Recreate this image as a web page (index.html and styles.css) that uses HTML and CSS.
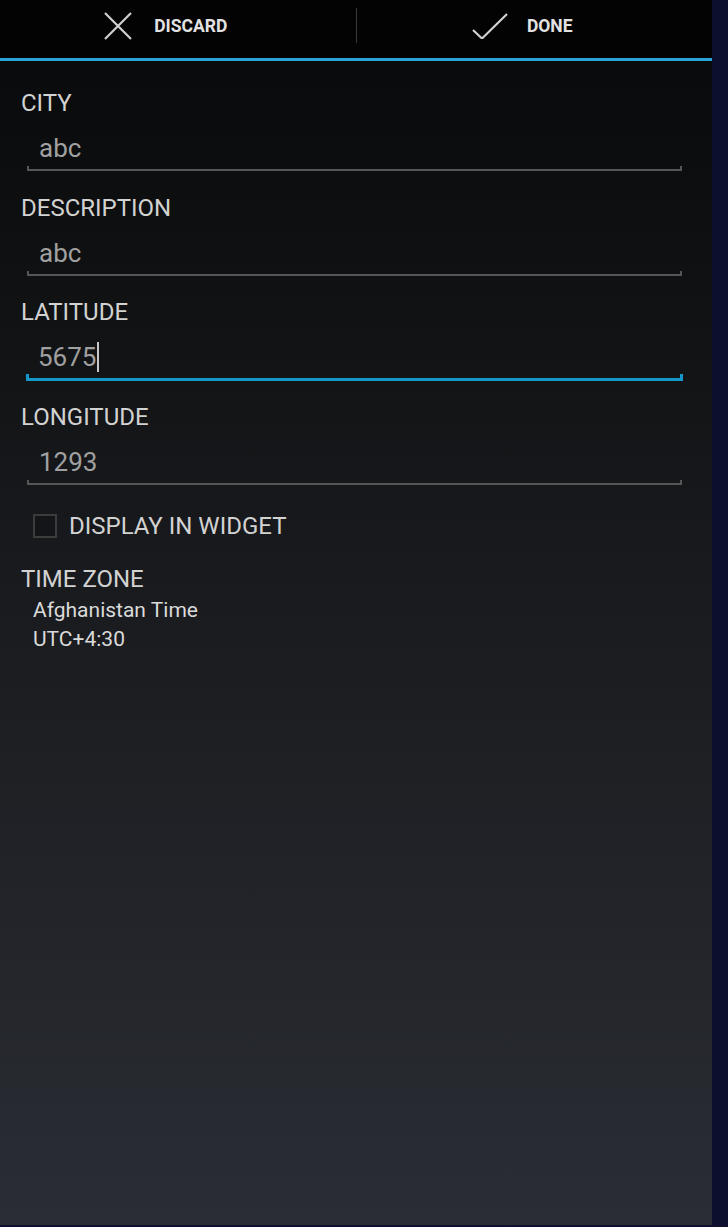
FILE: index.html
```html
<!DOCTYPE html>
<html>
<head>
<meta charset="utf-8">
<link rel="stylesheet" href="styles.css">
</head>
<body>
<div class="screen">
  <div class="panel">
    <div class="actionbar">
      <div class="action">
        <svg class="icon" width="28" height="28" viewBox="0 0 28 28"><path d="M1 1 L27 27 M27 1 L1 27" stroke="#d0d0d0" stroke-width="2.2" fill="none"/></svg>
        <span class="action-text">DISCARD</span>
      </div>
      <div class="divider"></div>
      <div class="action">
        <svg class="icon" width="36" height="26" viewBox="0 0 36 26"><path d="M1 17 L10 25.5 L35 1" stroke="#d0d0d0" stroke-width="2.2" fill="none"/></svg>
        <span class="action-text">DONE</span>
      </div>
    </div>
    <div class="content">
      <div class="field">
        <div class="label">CITY</div>
        <div class="input">
          <div class="value">abc</div>
          <div class="underline"></div>
        </div>
      </div>
      <div class="field">
        <div class="label">DESCRIPTION</div>
        <div class="input">
          <div class="value">abc</div>
          <div class="underline"></div>
        </div>
      </div>
      <div class="field">
        <div class="label">LATITUDE</div>
        <div class="input focused">
          <div class="value">5675<span class="cursor"></span></div>
          <div class="underline"></div>
        </div>
      </div>
      <div class="field">
        <div class="label">LONGITUDE</div>
        <div class="input">
          <div class="value">1293</div>
          <div class="underline"></div>
        </div>
      </div>
      <div class="check-row">
        <div class="checkbox"></div>
        <div class="check-label">DISPLAY IN WIDGET</div>
      </div>
      <div class="tz">
        <div class="label">TIME ZONE</div>
        <div class="tz-name first">Afghanistan Time</div>
        <div class="tz-name">UTC+4:30</div>
      </div>
    </div>
  </div>
  <div class="strip"></div>
</div>
</body>
</html>
```

FILE: styles.css
```css
html, body {
  margin: 0;
  padding: 0;
  background: #0d0f2e;
}
body {
  font-family: Roboto, "Liberation Sans", sans-serif;
  width: 728px;
  height: 1227px;
  overflow: hidden;
}
.screen {
  display: flex;
  width: 728px;
  height: 1227px;
}
.panel {
  width: 712px;
  height: 1225px;
  display: flex;
  flex-direction: column;
  background: linear-gradient(to bottom, #0a0a0b 0px, #0b0c0d 120px, #1c1e22 700px, #2a2d34 1225px);
}
.strip {
  flex: 1;
  background: #0d0f2e;
}
.actionbar {
  box-sizing: border-box;
  height: 61px;
  padding-bottom: 7px;
  background: #030303;
  border-bottom: 3px solid #2aa4d6;
  display: flex;
  align-items: center;
}
.action {
  flex: 1;
  display: flex;
  align-items: center;
  justify-content: center;
  padding-right: 24px;
  gap: 22px;
}
.action + .divider + .action {
  gap: 19px;
}
.action-text {
  color: #e2e2e2;
  font-weight: bold;
  font-size: 17.5px;
}
.divider {
  width: 1px;
  height: 35px;
  background: #3a3a3a;
}
.content {
  padding-top: 28px;
}
.field {
  height: 104.5px;
}
.label {
  color: #d2d2d2;
  font-size: 24px;
  line-height: 28px;
  padding-left: 21px;
}
.input {
  margin: 16px 0 0 27px;
  width: 655px;
}
.value {
  color: #a0a0a0;
  font-size: 26px;
  line-height: 30px;
  padding-left: 12px;
  margin-bottom: 3px;
  display: flex;
  align-items: center;
}
.cursor {
  display: inline-block;
  width: 2px;
  height: 30px;
  background: #c8c8c8;
  margin-left: 1px;
}
.underline {
  height: 3px;
  border: 2px solid #565656;
  border-top: none;
}
.focused {
  margin-left: 26px;
  width: 657px;
}
.focused .underline {
  height: 4px;
  border: 3px solid #1598c9;
  border-top: none;
  margin-top: -1px;
}
.check-row {
  display: flex;
  align-items: center;
  margin: 7px 0 0 33px;
  height: 24px;
}
.checkbox {
  width: 20px;
  height: 20px;
  border: 2px solid #3c3c3c;
  background: #141518;
}
.check-label {
  color: #d2d2d2;
  font-size: 24px;
  line-height: 28px;
  margin-left: 12px;
}
.tz {
  margin-top: 27px;
}
.tz .label {
  margin-bottom: 3px;
}
.tz-name {
  color: #dadada;
  font-size: 21px;
  line-height: 29px;
  padding-left: 33px;
}
```
